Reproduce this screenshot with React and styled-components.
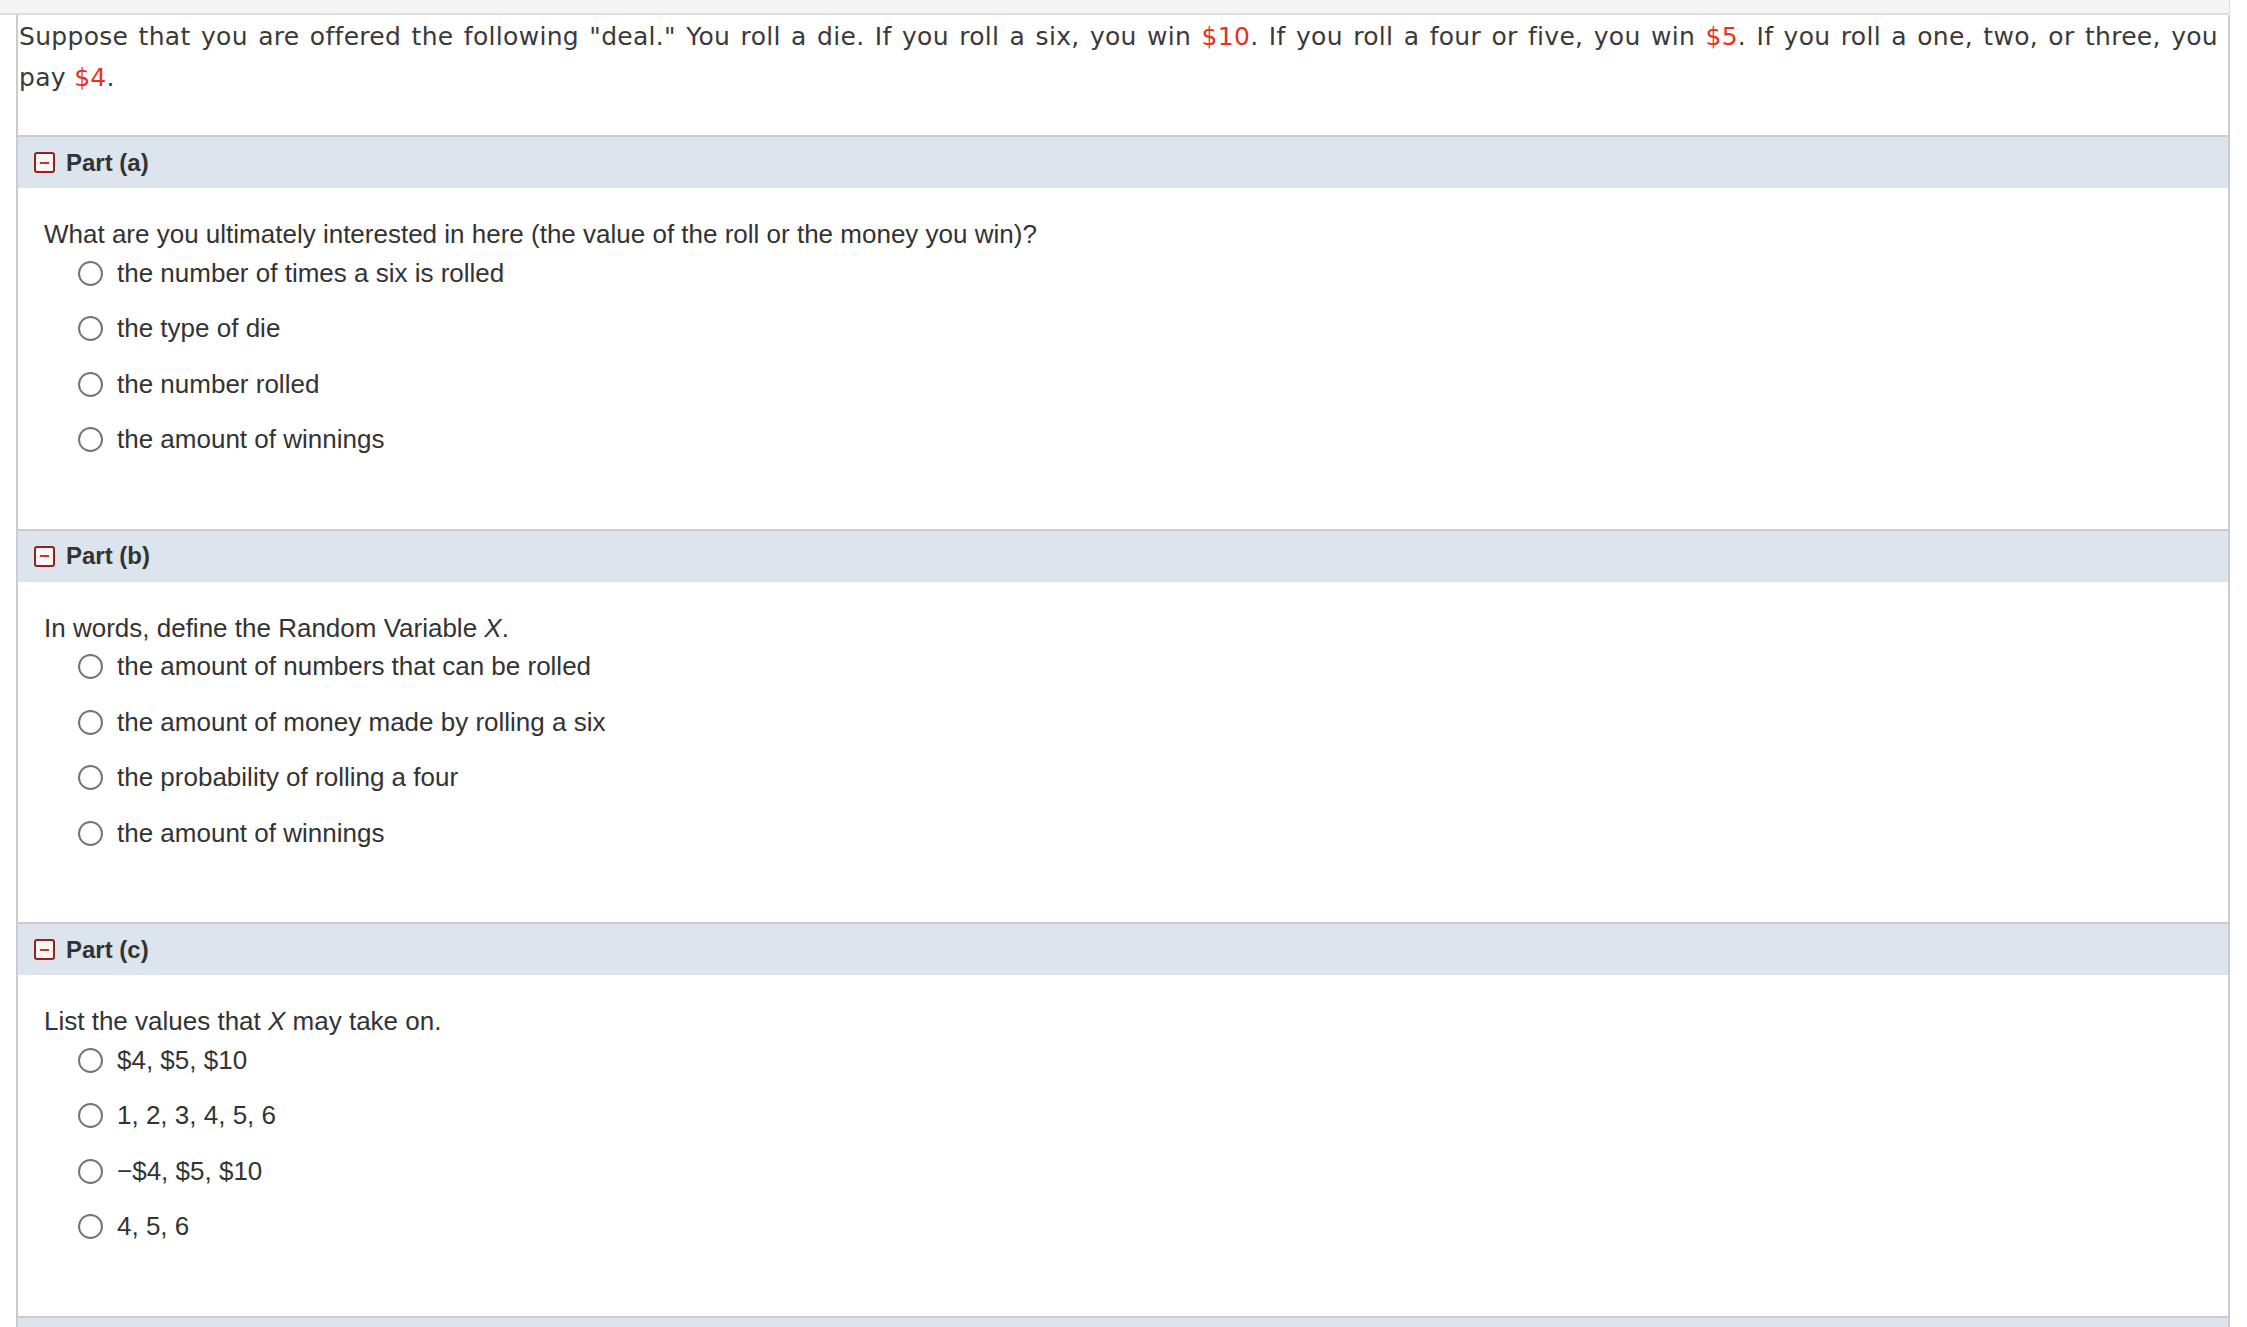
import styled, { createGlobalStyle } from "styled-components";

const GlobalStyle = createGlobalStyle`
  body {
    margin: 0;
    background: #ffffff;
    font-family: "Liberation Sans", Arial, sans-serif;
    color: #333333;
  }
`;

const Page = styled.div`
  width: 2230px;
`;

const TopStrip = styled.div`
  height: 13px;
  background: #f5f5f5;
  border-bottom: 2px solid #dddddd;
  border-right: 1px solid #dddddd;
  border-bottom-right-radius: 3px;
`;

const Sheet = styled.div`
  margin-left: 16px;
  border-left: 2px solid #cccccc;
  border-right: 2px solid #cccccc;
`;

const Intro = styled.p`
  margin: 0;
  padding: 1px 10px 37px 1px;
  font-family: "DejaVu Sans", Verdana, sans-serif;
  font-size: 25px;
  letter-spacing: 0.3px;
  line-height: 41px;
  text-align: justify;
  color: #3a3a3a;
`;

const Money = styled.span`
  color: #e8321f;
`;

const PartHeader = styled.div`
  display: flex;
  align-items: center;
  gap: 11px;
  height: 51px;
  padding-left: 16px;
  border-top: 2px solid #cccccc;
  background: #dce5ed;
  font-size: 24px;
  font-weight: 700;
  color: #333333;
`;

const Collapse = styled.span`
  display: flex;
  align-items: center;
  justify-content: center;
  box-sizing: border-box;
  width: 21px;
  height: 21px;
  border: 2px solid #962020;
  border-radius: 3px;
  background: #fbf6f6;

  &::before {
    content: "";
    width: 9px;
    height: 2px;
    background: #c0392b;
  }
`;

const PartBody = styled.div`
  padding: 31px 0 74px 26px;
`;

const Question = styled.div`
  font-size: 26px;
  line-height: 30px;
  color: #333333;
  margin-bottom: 9px;
`;

const Options = styled.div`
  display: flex;
  flex-direction: column;
  gap: 25.5px;
  padding-left: 34px;
`;

const Option = styled.label`
  display: flex;
  align-items: center;
  gap: 14px;
  height: 30px;
  font-size: 26px;
  color: #333333;
`;

const Radio = styled.span`
  box-sizing: border-box;
  width: 25px;
  height: 25px;
  border: 2px solid #757575;
  border-radius: 50%;
  background: #ffffff;
  flex: none;
`;

const parts = [
  {
    label: "Part (a)",
    question: "What are you ultimately interested in here (the value of the roll or the money you win)?",
    options: [
      "the number of times a six is rolled",
      "the type of die",
      "the number rolled",
      "the amount of winnings",
    ],
  },
  {
    label: "Part (b)",
    question: (
      <>
        In words, define the Random Variable <i>X</i>.
      </>
    ),
    options: [
      "the amount of numbers that can be rolled",
      "the amount of money made by rolling a six",
      "the probability of rolling a four",
      "the amount of winnings",
    ],
  },
  {
    label: "Part (c)",
    question: (
      <>
        List the values that <i>X</i> may take on.
      </>
    ),
    options: ["$4, $5, $10", "1, 2, 3, 4, 5, 6", "\u2212$4, $5, $10", "4, 5, 6"],
  },
];

export default function App() {
  return (
    <>
      <GlobalStyle />
      <Page>
        <TopStrip />
        <Sheet>
          <Intro>
            Suppose that you are offered the following "deal." You roll a die. If you roll a six, you
            win <Money>$10</Money>. If you roll a four or five, you win <Money>$5</Money>. If you roll
            a one, two, or three, you pay{"\u00a0"}<Money>$4</Money>.
          </Intro>
          {parts.map((part) => (
            <section key={part.label}>
              <PartHeader>
                <Collapse />
                {part.label}
              </PartHeader>
              <PartBody>
                <Question>{part.question}</Question>
                <Options>
                  {part.options.map((opt) => (
                    <Option key={opt}>
                      <Radio />
                      {opt}
                    </Option>
                  ))}
                </Options>
              </PartBody>
            </section>
          ))}
          <PartHeader>
            <Collapse />
            Part (d)
          </PartHeader>
        </Sheet>
      </Page>
    </>
  );
}
